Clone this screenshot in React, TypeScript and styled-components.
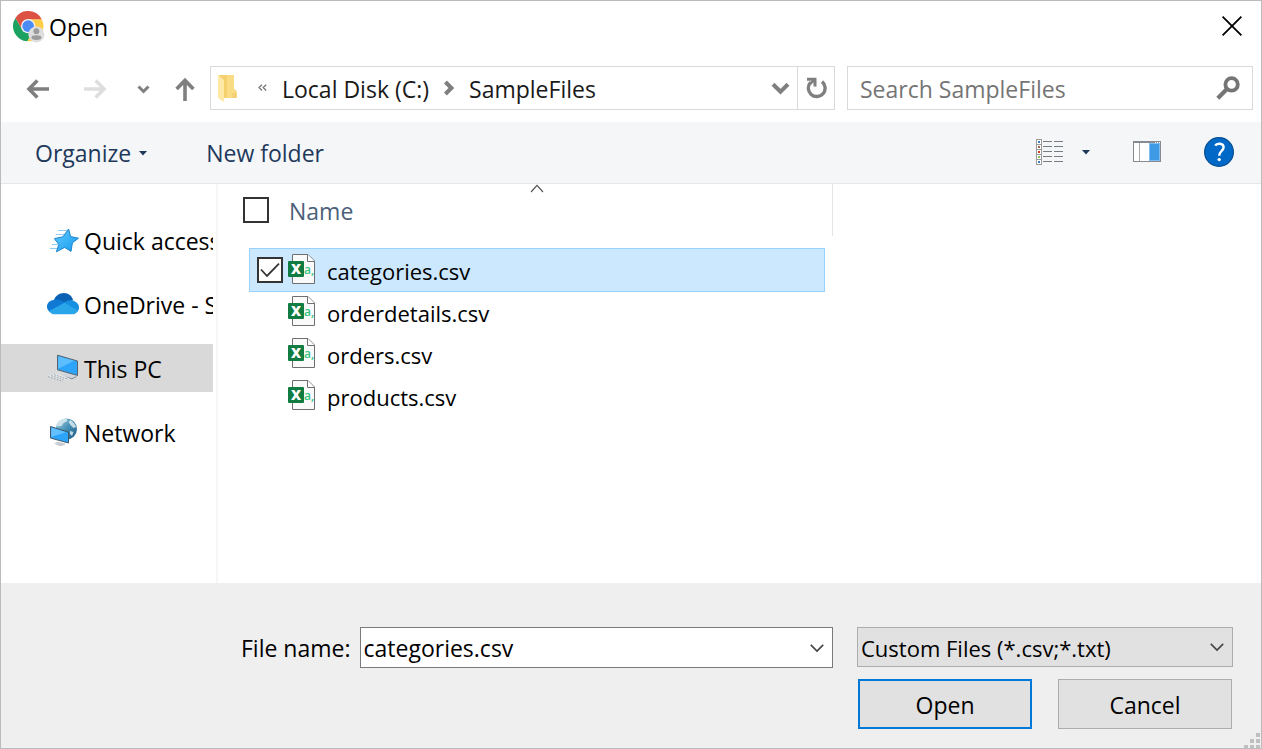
import React, { useState } from "react";
import styled, { createGlobalStyle, css } from "styled-components";

const GlobalStyle = createGlobalStyle`
  *, *::before, *::after { box-sizing: border-box; }
  body { margin: 0; background: #fff; }
  body, button, input, select {
    font-family: "Open Sans", "Noto Sans", sans-serif;
    font-size: 23px;
    line-height: 32px;
    color: #000;
  }
  button, input, select { margin: 0; padding: 0; border: 0; border-radius: 0; background: none; outline: none; }
  svg { display: block; flex: none; }
`;

const Dialog = styled.main`
  position: relative;
  display: flex;
  flex-direction: column;
  min-height: 100vh;
  border: 1px solid #bbb;
  background: #fff;
`;

const TitleBar = styled.header`
  display: flex;
  align-items: center;
  gap: 4px;
  height: 52px;
  padding: 0 18px 0 12px;
`;

const Title = styled.h1`
  flex: 1;
  margin: 0;
  font-size: 23px;
  font-weight: 400;
`;

const IconButton = styled.button`
  display: flex;
  align-items: center;
  justify-content: center;
`;

const CloseButton = styled(IconButton)`
  padding-bottom: 2px;
`;

const NavBar = styled.div`
  display: flex;
  align-items: center;
  padding: 13px 8px 12px 25px;
`;

const NavButtons = styled.div`
  display: flex;
  align-items: center;
  padding-top: 2px;
  margin-right: 15px;
`;

const NavButton = styled(IconButton)<{ $gap?: number }>`
  margin-left: ${(p) => p.$gap ?? 0}px;
`;

const NavFields = styled.div`
  flex: 1;
  min-width: 0;
  display: grid;
  grid-template-columns: 625fr 406fr;
  gap: 12px;
`;

const FieldBox = styled.div`
  display: flex;
  align-items: center;
  min-width: 0;
  height: 44px;
  border: 1px solid #d9d9d9;
`;

const AddressBox = styled(FieldBox)`
  padding-left: 7px;
`;

const Crumbs = styled.nav`
  flex: 1;
  min-width: 0;
  display: flex;
  align-items: center;
  gap: 15px;
  padding-left: 20px;
  white-space: nowrap;
  overflow: hidden;
`;

const Crumb = styled.button`
  padding-top: 2px;
  color: #191919;
`;

const RefreshButton = styled(IconButton)`
  width: 37px;
  height: 42px;
  margin-left: 7px;
  border-left: 1px solid #d9d9d9;
`;

const SearchBox = styled(FieldBox)`
  padding: 0 12px;
`;

const SearchInput = styled.input`
  flex: 1;
  min-width: 0;
  padding-top: 2px;
  &::placeholder { color: #757575; opacity: 1; }
`;

const Toolbar = styled.div`
  display: flex;
  align-items: center;
  height: 62px;
  padding: 0 27px 0 34px;
  background: #f5f6f8;
  border-bottom: 1px solid #e6e7ea;
`;

const ToolButton = styled(IconButton)`
  gap: 8px;
  margin-right: 59px;
  color: #1e395b;
`;

const ToolIcons = styled.div`
  display: flex;
  align-items: center;
  padding-bottom: 2px;
  margin-left: auto;
`;

const ViewButtons = styled.div`
  display: flex;
  align-items: center;
  gap: 18px;
  margin-right: 43px;
`;

const PaneButton = styled(IconButton)`
  margin-right: 43px;
`;

const Body = styled.div`
  flex: 1;
  display: flex;
  min-height: 300px;
`;

const Sidebar = styled.nav`
  flex: none;
  display: flex;
  flex-direction: column;
  gap: 16px;
  width: 217px;
  padding: 32px 3px 32px 0;
  border-right: 2px solid #f6f6f6;
`;

const SideItem = styled.a<{ $active?: boolean }>`
  display: flex;
  align-items: center;
  gap: 5px;
  height: 48px;
  padding: 2px 0 0 46px;
  color: #000;
  text-decoration: none;
  white-space: nowrap;
  overflow: hidden;
  background: ${(p) => (p.$active ? "#d9d9d9" : "transparent")};
`;

const FilePane = styled.section`
  flex: 1;
  min-width: 0;
`;

const FileTable = styled.table`
  display: block;
  width: 615px;
  max-width: 100%;
  thead, tbody { display: block; }
`;

const HeadRow = styled.tr`
  position: relative;
  display: flex;
  align-items: center;
  height: 52px;
  padding-left: 25px;
  border-right: 1px solid #e5e5e5;
`;

const HeadCell = styled.th`
  padding: 0;
  font-weight: 400;
  text-align: left;
`;

const NameButton = styled.button`
  display: block;
  margin-left: 20px;
  padding-top: 2px;
  color: #4c607a;
`;

const SortMark = styled.span`
  position: absolute;
  top: 0;
  left: 52%;
  transform: translateX(-50%);
`;

const FileRows = styled.tbody`
  padding: 13px 9px 0 32px;
`;

const FileRow = styled.tr<{ $selected: boolean }>`
  display: flex;
  align-items: center;
  height: 42px;
  padding-left: 7px;
  ${(p) =>
    p.$selected &&
    css`
      background: #cce8ff;
      box-shadow: 0 0 0 1px #99d1ff;
    `}
`;

const Cell = styled.td`
  display: flex;
  align-items: center;
  gap: 11px;
  padding: 0 0 0 5px;
`;

const FileName = styled.span`
  padding-top: 2px;
  font-size: 22px;
`;

const TickCell = styled.td<{ $shown: boolean }>`
  padding: 0;
  opacity: ${(p) => (p.$shown ? 1 : 0)};
`;

const TickLabel = styled.label`
  display: grid;
  place-items: center;
  width: 26px;
  height: 26px;
  > * { grid-area: 1 / 1; }
  > svg { pointer-events: none; }
`;

const TickInput = styled.input`
  appearance: none;
  width: 26px;
  height: 26px;
  border: 2px solid #333;
  background: #fff;
`;

const Footer = styled.footer`
  display: grid;
  grid-template-columns: 1fr 376px;
  column-gap: 24px;
  row-gap: 11px;
  padding: 44px 28px 19px 240px;
  background: #efefef;
`;

const NameField = styled.div`
  display: flex;
  align-items: center;
  gap: 9px;
  min-width: 0;
  white-space: nowrap;
`;

const ComboBox = styled.div`
  flex: 1;
  min-width: 0;
  display: flex;
  align-items: center;
  height: 41px;
  padding: 0 8px 0 3px;
  border: 1px solid #7a7a7a;
  background: #fff;
`;

const ComboInput = styled.input`
  flex: 1;
  min-width: 0;
`;

const SelectBox = styled.div`
  display: grid;
  align-items: center;
  height: 40px;
  > * { grid-area: 1 / 1; }
  > svg { justify-self: end; margin-right: 9px; pointer-events: none; }
`;

const Select = styled.select`
  appearance: none;
  width: 100%;
  height: 40px;
  padding: 2px 32px 0 3px;
  border: 1px solid #adadad;
  background: #e1e1e1;
  font-size: 22px;
`;

const Actions = styled.div`
  grid-column: 2;
  display: grid;
  grid-template-columns: 1fr 1fr;
  gap: 26px;
  padding: 0 1px;
`;

const ActionButton = styled.button<{ $primary?: boolean }>`
  height: 50px;
  padding-top: 2px;
  border: ${(p) => (p.$primary ? "2px solid #0078d7" : "1px solid #adadad")};
  background: #e1e1e1;
`;

const Grip = styled.span`
  position: absolute;
  right: 0;
  bottom: 0;
`;

const ChromeIcon = () => (
  <svg width="32" height="32" viewBox="0 0 32 32">
    <g transform="translate(-1.4 -1.4) scale(0.69)">
      <path d="M22.86 45.97A22 22 0 0 1 5.54 12.03L15.34 29L32.66 29Z" fill="#1ba261" />
      <path d="M43.6 14A22 22 0 0 1 22.86 45.97L32.66 29L24 14Z" fill="#ffcd46" />
      <path d="M5.54 12.03A22 22 0 0 1 43.6 14L24 14L15.34 29Z" fill="#dd5144" />
      <circle cx="24" cy="24" r="10.4" fill="#f3f3f3" />
      <circle cx="24" cy="24" r="8.4" fill="#4b8bf5" />
    </g>
    <circle cx="23.4" cy="23.4" r="8" fill="#dedede" />
    <circle cx="23.4" cy="20.2" r="2.9" fill="#9b9b9b" />
    <ellipse cx="23.4" cy="26.6" rx="5" ry="2.4" fill="#9b9b9b" />
  </svg>
);

const CloseIcon = () => (
  <svg width="22" height="22" viewBox="0 0 22 22" stroke="#000" strokeWidth="1.8">
    <path d="M1.6 1.6L20.4 20.4M20.4 1.6L1.6 20.4" />
  </svg>
);

const ArrowIcon = ({ color, flip }: { color: string; flip?: boolean }) => (
  <svg width="23" height="20" viewBox="0 0 23 20" fill="none" stroke={color} strokeWidth="3.6">
    <path d={flip ? "M0 10H20M11.6 1.6L20 10L11.6 18.4" : "M23 10H3M11.4 1.6L3 10L11.4 18.4"} />
  </svg>
);

const UpIcon = () => (
  <svg width="20" height="24" viewBox="0 0 20 24" fill="none" stroke="#7f7f7f" strokeWidth="3.6">
    <path d="M10 24V3M1.6 12L10 3.4L18.4 12" />
  </svg>
);

const ChevronIcon = ({ width, color, stroke }: { width: number; color: string; stroke: number }) => {
  const inset = stroke / 2;
  const rise = (width - stroke) / 4;
  return (
    <svg width={width} height="14" viewBox={`0 0 ${width} 14`} fill="none" stroke={color} strokeWidth={stroke}>
      <path d={`M${inset} ${7 - rise}L${width / 2} ${7 + rise}L${width - inset} ${7 - rise}`} />
    </svg>
  );
};

const FolderIcon = () => (
  <svg width="20" height="28" viewBox="0 0 20 28">
    <path d="M1 1H16V15L18.5 17V24H6L1 20Z" fill="#f4d06f" />
    <path d="M9 1H16V15L18.5 17V24H9Z" fill="#f9dc84" />
    <path d="M0 1L6 6V28L0 24Z" fill="#ffe9a6" />
    <path d="M14.5 24V19H18.5V24Z" fill="#f2cf6f" />
  </svg>
);

const EarlierIcon = () => (
  <svg width="9" height="8" viewBox="0 0 9 8" fill="none" stroke="#777" strokeWidth="1.3">
    <path d="M4 .8L1 3.6L4 6.4M8.2 .8L5.2 3.6L8.2 6.4" />
  </svg>
);

const CrumbArrow = () => (
  <svg width="10" height="16" viewBox="0 0 10 16" fill="none" stroke="#7f7f7f" strokeWidth="4">
    <path d="M1.4 2L7.4 8L1.4 14" />
  </svg>
);

const RefreshIcon = () => (
  <svg width="22" height="22" viewBox="0 0 22 22" fill="none" stroke="#7f7f7f">
    <path d="M17 4.6A8.4 8.4 0 1 1 5.6 5.4" strokeWidth="3.4" />
    <path d="M2 2.3H10V9.6" strokeWidth="3" />
    <path d="M4.4 7.2L9.4 3" strokeWidth="2.8" />
  </svg>
);

const SearchIcon = () => (
  <svg width="24" height="24" viewBox="0 0 24 24" fill="none" stroke="#757575">
    <circle cx="15.6" cy="8.4" r="6.2" strokeWidth="3.8" />
    <path d="M11 13L1.8 22.2" strokeWidth="4.2" />
  </svg>
);

const CaretIcon = () => (
  <svg width="8" height="6" viewBox="0 0 8 6">
    <path d="M0 1H8L4 5.4Z" fill="#1e395b" />
  </svg>
);

const viewDots = ["#3f7fc0", "#9a6350", "#e03a1c", "#8cbf5a", "#3f7fc0"];

const DetailsIcon = () => (
  <svg width="28" height="26" viewBox="0 0 28 26">
    {viewDots.map((color, i) => (
      <g key={i}>
        <rect x="0.5" y={0.5 + i * 5} width="5" height="5" fill="#fff" stroke="#9a9a9a" />
        <rect x="2" y={2 + i * 5} width="2" height="2" fill={color} />
        <path d={`M7 ${2.5 + i * 5}H16M18 ${2.5 + i * 5}H27`} stroke="#777b82" />
      </g>
    ))}
  </svg>
);

const PreviewIcon = () => (
  <svg width="28" height="21" viewBox="0 0 28 21">
    <rect x="0.5" y="0.5" width="27" height="20" fill="#fff" stroke="#868b91" />
    <rect width="28" height="2" fill="#868b91" />
    <path d="M22 1.5H27" stroke="#fff" strokeDasharray="1 1" />
    <path d="M6.5 2V20" stroke="#a9a9a9" />
    <rect x="16" y="2" width="11" height="18" fill="#7fbdf0" />
    <rect x="17" y="3" width="9" height="16" fill="#3f9ae5" />
  </svg>
);

const HelpIcon = () => (
  <svg width="30" height="30" viewBox="0 0 30 30">
    <circle cx="15" cy="15" r="14.4" fill="#0069c8" stroke="#0a4f91" strokeWidth="1.2" />
    <path d="M11.2 8.6C12.6 6 19.8 5.6 19.6 10.4C19.4 14 15.2 14.2 15.2 18.8" fill="none" stroke="#fff" strokeWidth="2.4" />
    <circle cx="15.2" cy="22.6" r="1.7" fill="#fff" />
  </svg>
);

const StarIcon = () => (
  <svg width="32" height="30" viewBox="0 0 32 30">
    <defs>
      <linearGradient id="star" x1="0" y1="0" x2="1" y2="1">
        <stop offset="0" stopColor="#62ccff" />
        <stop offset="1" stopColor="#1499ee" />
      </linearGradient>
    </defs>
    <path d="M11 4.5H20M9 8.5H18M5 18.5H11M3 22.5H10M8 14.5H12" stroke="#8ccdf5" />
    <path d="M21.6 3L23.6 10.6L31.5 12.2L25.4 16.8L24 25.4L17.6 21.4L9.4 25.8L11.8 18.4L7.4 12.6L16 10.8Z" fill="url(#star)" stroke="#1c86cf" strokeLinejoin="round" />
  </svg>
);

const CloudIcon = () => (
  <svg width="32" height="24" viewBox="0 0 32 24">
    <path d="M6 9C8 3 12 0 17 0C21.5 0 25 3 26 7L17 12Z" fill="#0b62b5" />
    <path d="M7 7C11 5.6 15 7.4 18 9.6L14 16L3 19C0 17 0 14 0 13.5C0 10 3 7.2 7 7Z" fill="#0f79d4" />
    <path d="M17.5 9.3C20 7 26 6.6 28 8.6C31 10 32 12.5 32 14.5C32 16.5 31 18 30 19L14 13Z" fill="#158fdf" />
    <path d="M2 18L17.5 9.8L31 17.6C29.8 20.4 28 21.2 26 21.2H7C5 21.2 3 20 2 18Z" fill="#29a6ea" />
  </svg>
);

const PcIcon = () => (
  <svg width="32" height="30" viewBox="0 0 32 30">
    <path d="M14 20L22 18L29.5 22.4L25 25L17 23Z" fill="#cfd5da" />
    <path d="M19 23.2L25 24.8L29.5 22.6" fill="none" stroke="#7d8993" />
    <path d="M10.5 1.2L30.5 7V21.4L10.5 15.8Z" fill="#2ba4fa" stroke="#56636e" />
    <path d="M11.2 2.2L27 6.8L11.2 14.8Z" fill="#5dbeff" />
    <path d="M0 22.2L9 19.6L23 24.6L16 28Z" fill="#e6e9ec" />
    <path d="M1 22.6L16 27.4M4 21.6L18.6 26.4M7 20.6L21 25.2" stroke="#9da6ae" strokeDasharray="2 1" />
  </svg>
);

const NetworkIcon = () => (
  <svg width="32" height="30" viewBox="0 0 32 30">
    <defs>
      <linearGradient id="globe" x1="0" y1="0" x2="1" y2="1">
        <stop offset="0" stopColor="#a9d4e4" />
        <stop offset=".5" stopColor="#4590b5" />
        <stop offset="1" stopColor="#1b557f" />
      </linearGradient>
    </defs>
    <circle cx="19.4" cy="11" r="10.6" fill="url(#globe)" />
    <path d="M10.5 6C12.5 2 16.5 .4 19.5 .6L20.5 3L16.5 5L14.5 8L9.5 8.5ZM23.5 2C26.5 4 28.5 7 29.1 9L26.5 10L23.5 7L21.5 4ZM23 13L26.5 14L25 18L23 16Z" fill="#dcebed" opacity=".85" />
    <path d="M3.5 8.5L21.5 14.2V25L3.5 20Z" fill="#2ba4fa" stroke="#43586a" />
    <path d="M4.2 9.6L19 14.2L4.2 19Z" fill="#62c0ff" />
    <path d="M7 25.6L11 23.8L18 25.6V27L13 28.2Z" fill="#c6ccd1" />
  </svg>
);

const CsvIcon = () => (
  <svg width="28" height="33" viewBox="0 0 28 33">
    <path d="M4.5 .5H20L26.5 7V29.5H4.5Z" fill="#fafafa" stroke="#6f6f6f" />
    <path d="M19.5 .5V7.5H26.5" fill="#fff" stroke="#6f6f6f" />
    <rect y="7" width="16" height="16" rx="1" fill="#107c41" />
    <text x="8" y="20" textAnchor="middle" fill="#fff" fontSize="14" fontWeight="800">X</text>
    <text x="16" y="20" fill="#33c481" fontSize="12" fontWeight="600">a,</text>
  </svg>
);

const SortIcon = () => (
  <svg width="14" height="9" viewBox="0 0 14 9" fill="none" stroke="#555" strokeWidth="1.2">
    <path d="M1 8L7 1.4L13 8" />
  </svg>
);

const GripIcon = () => (
  <svg width="18" height="15" viewBox="0 0 18 15" fill="#bfbfbf">
    <path d="M13 0H17V4H13ZM7 6H11V10H7ZM13 6H17V10H13ZM1 12H5V15H1ZM7 12H11V15H7ZM13 12H17V15H13Z" />
  </svg>
);

const places = [
  { name: "Quick access", icon: <StarIcon /> },
  { name: "OneDrive - S", icon: <CloudIcon /> },
  { name: "This PC", icon: <PcIcon /> },
  { name: "Network", icon: <NetworkIcon /> },
];

const files = ["categories.csv", "orderdetails.csv", "orders.csv", "products.csv"];

function Tick({ label, checked, onChange }: { label: string; checked: boolean; onChange: () => void }) {
  return (
    <TickLabel>
      <TickInput type="checkbox" aria-label={label} checked={checked} onChange={onChange} />
      {checked && (
        <svg width="20" height="16" viewBox="0 0 20 16" fill="none" stroke="#333" strokeWidth="1.8">
          <path d="M1 7.5L7 14L19 1.6" />
        </svg>
      )}
    </TickLabel>
  );
}

export default function App() {
  const [selected, setSelected] = useState("categories.csv");
  const [fileName, setFileName] = useState("categories.csv");
  const [all, setAll] = useState(false);

  const pick = (file: string) => {
    setSelected(file);
    setFileName(file);
  };

  return (
    <>
      <GlobalStyle />
      <Dialog>
        <TitleBar>
          <ChromeIcon />
          <Title>Open</Title>
          <CloseButton aria-label="Close"><CloseIcon /></CloseButton>
        </TitleBar>

        <NavBar>
          <NavButtons>
            <NavButton aria-label="Back"><ArrowIcon color="#7f7f7f" /></NavButton>
            <NavButton aria-label="Forward" $gap={35}><ArrowIcon color="#dedede" flip /></NavButton>
            <NavButton aria-label="Recent locations" $gap={30}><ChevronIcon width={13} color="#7f7f7f" stroke={3} /></NavButton>
            <NavButton aria-label="Up" $gap={25}><UpIcon /></NavButton>
          </NavButtons>
          <NavFields>
            <AddressBox>
              <FolderIcon />
              <Crumbs aria-label="Address">
                <EarlierIcon />
                <Crumb>Local Disk (C:)</Crumb>
                <CrumbArrow />
                <Crumb>SampleFiles</Crumb>
              </Crumbs>
              <IconButton aria-label="Previous locations"><ChevronIcon width={19} color="#7f7f7f" stroke={4} /></IconButton>
              <RefreshButton aria-label="Refresh"><RefreshIcon /></RefreshButton>
            </AddressBox>
            <SearchBox>
              <SearchInput type="text" aria-label="Search SampleFiles" placeholder="Search SampleFiles" />
              <IconButton aria-label="Search"><SearchIcon /></IconButton>
            </SearchBox>
          </NavFields>
        </NavBar>

        <Toolbar>
          <ToolButton>Organize<CaretIcon /></ToolButton>
          <ToolButton>New folder</ToolButton>
          <ToolIcons>
            <ViewButtons>
              <IconButton aria-label="Change your view"><DetailsIcon /></IconButton>
              <IconButton aria-label="More options"><CaretIcon /></IconButton>
            </ViewButtons>
            <PaneButton aria-label="Show the preview pane"><PreviewIcon /></PaneButton>
            <IconButton aria-label="Help"><HelpIcon /></IconButton>
          </ToolIcons>
        </Toolbar>

        <Body>
          <Sidebar aria-label="Places">
            {places.map((place) => (
              <SideItem key={place.name} href="#" $active={place.name === "This PC"}>
                {place.icon}
                {place.name}
              </SideItem>
            ))}
          </Sidebar>
          <FilePane>
            <FileTable>
              <thead>
                <HeadRow>
                  <HeadCell><Tick label="Select all" checked={all} onChange={() => setAll(!all)} /></HeadCell>
                  <HeadCell aria-sort="ascending">
                    <NameButton>Name</NameButton>
                    <SortMark><SortIcon /></SortMark>
                  </HeadCell>
                </HeadRow>
              </thead>
              <FileRows>
                {files.map((file) => (
                  <FileRow key={file} $selected={all || file === selected} onClick={() => pick(file)}>
                    <TickCell $shown={all || file === selected}>
                      <Tick label={file} checked={all || file === selected} onChange={() => pick(file)} />
                    </TickCell>
                    <Cell><CsvIcon /><FileName>{file}</FileName></Cell>
                  </FileRow>
                ))}
              </FileRows>
            </FileTable>
          </FilePane>
        </Body>

        <Footer>
          <NameField>
            <label htmlFor="file-name">File name:</label>
            <ComboBox>
              <ComboInput id="file-name" type="text" value={fileName} onChange={(e) => setFileName(e.target.value)} />
              <IconButton aria-label="Recent files"><ChevronIcon width={14} color="#444" stroke={1.6} /></IconButton>
            </ComboBox>
          </NameField>
          <SelectBox>
            <Select aria-label="File type">
              <option>Custom Files (*.csv;*.txt)</option>
            </Select>
            <ChevronIcon width={14} color="#444" stroke={1.6} />
          </SelectBox>
          <Actions>
            <ActionButton $primary>Open</ActionButton>
            <ActionButton>Cancel</ActionButton>
          </Actions>
        </Footer>
        <Grip><GripIcon /></Grip>
      </Dialog>
    </>
  );
}
